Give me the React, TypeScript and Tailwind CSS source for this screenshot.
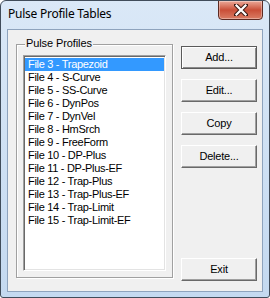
import React, { useState } from 'react';

const profiles = [
  'File 3 - Trapezoid',
  'File 4 - S-Curve',
  'File 5 - SS-Curve',
  'File 6 - DynPos',
  'File 7 - DynVel',
  'File 8 - HmSrch',
  'File 9 - FreeForm',
  'File 10 - DP-Plus',
  'File 11 - DP-Plus-EF',
  'File 12 - Trap-Plus',
  'File 13 - Trap-Plus-EF',
  'File 14 - Trap-Limit',
  'File 15 - Trap-Limit-EF',
];

const font = { fontFamily: '"Liberation Sans", Arial, sans-serif' };

const DlgButton: React.FC<{ label: string; isDefault?: boolean }> = ({ label, isDefault }) => (
  <button
    className={`w-[76px] h-[23px] bg-[#f0f0f0] text-[11px] tracking-[-0.2px] text-black leading-none flex items-center justify-center ${
      isDefault
        ? 'border border-[#5a5a5a] shadow-[inset_1px_1px_0_#ffffff,inset_-1px_-1px_0_#8a8a8a]'
        : 'border-t border-l border-t-white border-l-white border-r border-b border-r-[#696969] border-b-[#696969] shadow-[inset_-1px_-1px_0_#a0a0a0]'
    }`}
  >
    {label}
  </button>
);

export default function App() {
  const [selected, setSelected] = useState(0);

  return (
    <div
      className="w-[270px] h-[298px] flex flex-col border border-[#404c5a] rounded-t-[6px] rounded-b-[3px] bg-gradient-to-b from-[#dae8f7] to-[#c4d9f0] overflow-hidden"
      style={font}
    >
      {/* title bar */}
      <div className="h-[28px] flex items-start shrink-0">
        <span
          className="pl-[7px] pt-[7px] text-[12px] tracking-[-0.25px] text-black leading-none"
          style={{ fontFamily: '"Noto Sans", "Open Sans", sans-serif' }}
        >
          Pulse Profile Tables
        </span>
        <div className="ml-auto mr-[6px] -mt-[1px] w-[45px] h-[20px] rounded-b-[4px] border border-[#5c2a22] bg-gradient-to-b from-[#eaa898] via-[#c94e37] to-[#d97c64] shadow-[inset_0_0_0_1px_rgba(255,255,255,0.35)] flex items-center justify-center">
          <svg width="14" height="12" viewBox="0 0 14 12">
            <path d="M2 1 L12 11 M12 1 L2 11" stroke="#3a1a14" strokeWidth="4.2" strokeLinecap="square" />
            <path d="M2.5 1.5 L11.5 10.5 M11.5 1.5 L2.5 10.5" stroke="#ffffff" strokeWidth="2.2" strokeLinecap="square" />
          </svg>
        </div>
      </div>

      {/* client area */}
      <div className="mx-[6px] h-[263px] border border-[#8ea3bd] bg-[#f0f0f0] flex">
        {/* group box */}
        <div className="ml-[8px] mt-[14px] w-[157px] h-[234px] relative border border-[#a0a0a0] shadow-[inset_1px_1px_0_#ffffff,1px_1px_0_#ffffff]">
          <span className="absolute -top-[7px] left-[8px] px-[1px] bg-[#f0f0f0] text-[11px] tracking-[-0.1px] leading-none text-black">
            Pulse Profiles
          </span>
          <div className="ml-[6px] mt-[10px] w-[143px] h-[216px] bg-white border-t border-l border-t-[#a0a0a0] border-l-[#a0a0a0] border-r border-b border-r-white border-b-white shadow-[inset_1px_1px_0_#696969,inset_-1px_-1px_0_#e3e3e3] p-[1px]">
            <div className="pt-[1px]">
              {profiles.map((p, i) => (
                <div
                  key={p}
                  onClick={() => setSelected(i)}
                  className={`h-[13px] pl-[3px] text-[11px] tracking-[-0.3px] leading-[13px] whitespace-nowrap ${
                    selected === i ? 'bg-[#3399ff] text-white' : 'text-black'
                  }`}
                >
                  {p}
                </div>
              ))}
            </div>
          </div>
        </div>

        {/* buttons */}
        <div className="ml-[8px] pt-[16px] pb-[10px] flex flex-col gap-[10px]">
          <DlgButton label="Add..." isDefault />
          <DlgButton label="Edit..." />
          <DlgButton label="Copy" />
          <DlgButton label="Delete..." />
          <div className="mt-auto">
            <DlgButton label="Exit" />
          </div>
        </div>
      </div>
    </div>
  );
}
